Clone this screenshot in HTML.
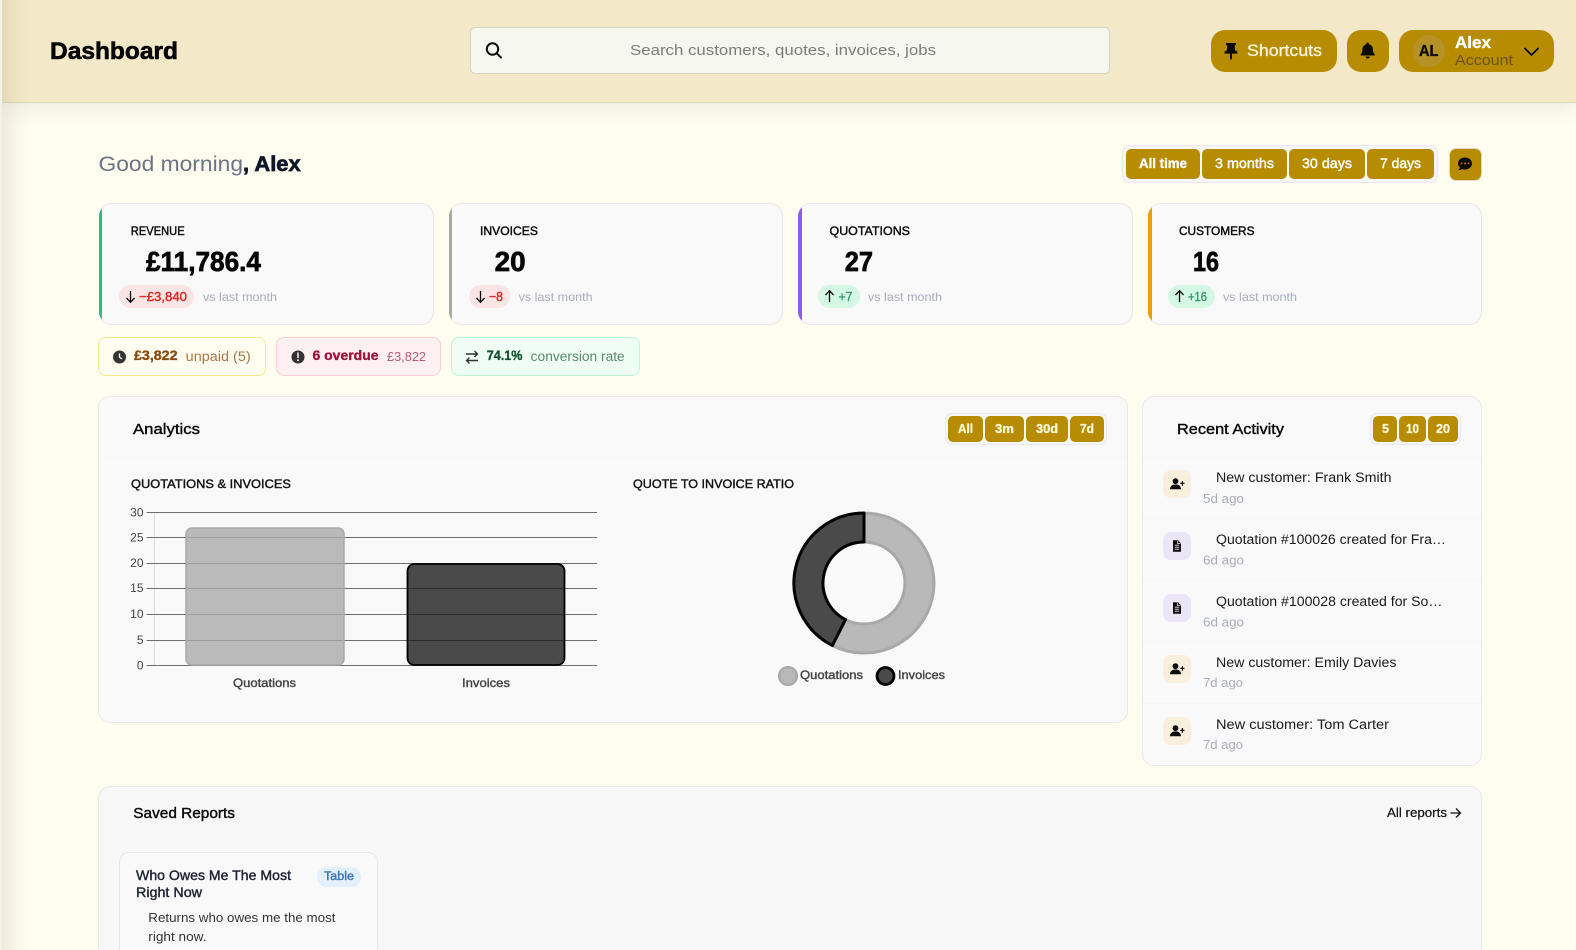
<!DOCTYPE html>
<html lang="en"><head><meta charset="utf-8"><title>Dashboard</title>
<style>
*{box-sizing:border-box}
html,body{margin:0;padding:0;width:1576px;height:950px;overflow:hidden;background:#fffcf0;font-family:"Liberation Sans",sans-serif}
#page{position:relative;width:1576px;height:950px;overflow:hidden;background:#fffcf0}
.b{position:absolute}
#side{left:0;top:0;width:2px;height:950px;background:#f2f1ea;z-index:3}
#sh{left:2px;top:0;width:30px;height:950px;background:linear-gradient(90deg,rgba(60,50,20,.085),rgba(60,50,20,.025) 50%,rgba(60,50,20,0));z-index:3}
#head{left:2px;top:0;width:1574px;height:103px;background:#f3e9c9;border-bottom:1px solid #e0d6b8;box-shadow:0 4px 22px rgba(0,0,0,.08);z-index:2}
.card{background:#f9f9fa;border:1px solid #e5e7eb;border-left:0;border-radius:13px;top:203px;height:122px;width:335px;overflow:hidden}
.card i{position:absolute;left:0;top:-1px;bottom:-1px;width:3.5px}
.chip{top:337px;height:39px;border-radius:8px;border:1px solid}
.panel{background:#f9f9f9;border:1px solid #e8e9ec;border-radius:12px}
.line{height:1px;background:#f6f6f7}
.btn{background:#b88c00;border-radius:5px}
.grp{background:#f7f7f8;border:1px solid #e8e8ee;border-radius:7px}
svg{position:absolute;left:0;top:0;z-index:4}
text{font-family:"Liberation Sans",sans-serif}
.bd{font-weight:700;stroke-width:.35px}
.m{stroke:currentColor;stroke-width:.4px}
</style></head><body>
<div id="page">
<div class="b" id="side"></div>
<div class="b" id="sh"></div>
<div class="b" id="head"></div>
<div class="b" style="left:470px;top:27px;width:640px;height:47px;background:#f6f7ef;border:1px solid #d6d3c3;border-radius:5px;z-index:3"></div>
<div class="b" style="left:1211px;top:30px;width:126px;height:42px;background:#b88c00;border-radius:14px;z-index:3"></div>
<div class="b" style="left:1347px;top:30px;width:42px;height:42px;background:#b88c00;border-radius:14px;z-index:3"></div>
<div class="b" style="left:1399px;top:30px;width:155px;height:42px;background:#b88c00;border-radius:14px;z-index:3"></div>
<div class="b" style="left:1413px;top:35px;width:32px;height:32px;background:#b59128;border-radius:50%;z-index:3"></div>

<div class="b grp" style="left:1122px;top:145px;width:316px;height:38px"></div>
<div class="b btn" style="left:1126px;top:149px;width:74px;height:30px"></div>
<div class="b btn" style="left:1202px;top:149px;width:85px;height:30px"></div>
<div class="b btn" style="left:1289px;top:149px;width:76px;height:30px"></div>
<div class="b btn" style="left:1367px;top:149px;width:67px;height:30px"></div>
<div class="b btn" style="left:1448.500px;top:147.500px;width:33px;height:33px;border-radius:7px;border:1px solid #e0d8b8"></div>

<div class="b card" style="left:98.500px"><i style="background:#34b67e"></i></div>
<div class="b card" style="left:448.500px;width:334px"><i style="background:#a8a8a8"></i></div>
<div class="b card" style="left:798px"><i style="background:#8b5cf6"></i></div>
<div class="b card" style="left:1148px;width:333.500px"><i style="background:#eaa000"></i></div>
<div class="b" style="left:119px;top:285px;width:75px;height:23px;background:#fbe4e4;border-radius:12px"></div>
<div class="b" style="left:469px;top:285px;width:41px;height:23px;background:#fbe4e4;border-radius:12px"></div>
<div class="b" style="left:818px;top:285px;width:42px;height:23px;background:#d5f8e4;border-radius:12px"></div>
<div class="b" style="left:1168px;top:285px;width:47px;height:23px;background:#d5f8e4;border-radius:12px"></div>

<div class="b chip" style="left:98px;width:168px;background:#fffdf0;border-color:#fde68a"></div>
<div class="b chip" style="left:276px;width:165px;background:#fff1f2;border-color:#fecdd3"></div>
<div class="b chip" style="left:451px;width:189px;background:#f0fdf4;border-color:#bbf7d0"></div>

<div class="b panel" style="left:98px;top:396px;width:1030px;height:327px"></div>
<div class="b line" style="left:99px;top:457px;width:1028px"></div>
<div class="b grp" style="left:945px;top:413px;width:162px;height:32px"></div>
<div class="b btn" style="left:948px;top:416px;width:35px;height:26px"></div>
<div class="b btn" style="left:985px;top:416px;width:39px;height:26px"></div>
<div class="b btn" style="left:1026px;top:416px;width:42px;height:26px"></div>
<div class="b btn" style="left:1070px;top:416px;width:34px;height:26px"></div>

<div class="b panel" style="left:1142px;top:396px;width:340px;height:370px;background:#f9f9fa"></div>
<div class="b line" style="left:1143px;top:457px;width:338px"></div>
<div class="b line" style="left:1143px;top:518px;width:338px"></div>
<div class="b line" style="left:1143px;top:580px;width:338px"></div>
<div class="b line" style="left:1143px;top:641px;width:338px"></div>
<div class="b line" style="left:1143px;top:703px;width:338px"></div>
<div class="b grp" style="left:1370px;top:413px;width:91px;height:32px"></div>
<div class="b btn" style="left:1373px;top:416px;width:24px;height:26px"></div>
<div class="b btn" style="left:1399px;top:416px;width:27px;height:26px"></div>
<div class="b btn" style="left:1428px;top:416px;width:30px;height:26px"></div>
<div class="b" style="left:1163px;top:470px;width:28px;height:28px;background:#f8f0dd;border-radius:8px"></div>
<div class="b" style="left:1163px;top:532px;width:28px;height:28px;background:#ebe5f8;border-radius:8px"></div>
<div class="b" style="left:1163px;top:594px;width:28px;height:28px;background:#ebe5f8;border-radius:8px"></div>
<div class="b" style="left:1163px;top:655px;width:28px;height:28px;background:#f8f0dd;border-radius:8px"></div>
<div class="b" style="left:1163px;top:717px;width:28px;height:28px;background:#f8f0dd;border-radius:8px"></div>

<div class="b panel" style="left:98px;top:786px;width:1384px;height:190px;background:#f8f8f9"></div>
<div class="b line" style="left:99px;top:835px;width:1382px"></div>
<div class="b" style="left:119px;top:852px;width:259px;height:120px;background:#f9f9fa;border:1px solid #e5e7eb;border-radius:10px"></div>
<div class="b" style="left:317px;top:867px;width:44px;height:20px;background:#e3effb;border-radius:10px"></div>

<svg width="1576" height="950" viewBox="0 0 1576 950" xmlns="http://www.w3.org/2000/svg">
<!-- header -->
<text x="50" y="59" font-size="24.500" class="bd" fill="#050505" stroke="#050505" style="stroke-width:.6px" textLength="128" lengthAdjust="spacingAndGlyphs">Dashboard</text>
<g fill="none" stroke="#0a0a0a" stroke-width="2"><circle cx="492.500" cy="49" r="5.700"/><path d="M496.600 53.200l4.400 4.400" stroke-linecap="round"/></g>
<text x="630" y="55" font-size="15" fill="#7c7c78" textLength="306" lengthAdjust="spacingAndGlyphs">Search customers, quotes, invoices, jobs</text>
<path transform="translate(1231 51)" fill="#0a0a00" d="M-5-8h10v2.200h-1.400l.7 5.500C6-.3 6.400.5 6.400 1.600v1H1v5l-1 1.500-1-1.500v-5H-6.400v-1C-6.400.5-6-.3-4.300-.3L-3.600-5.800H-5z"/>
<text x="1247" y="56" font-size="17" class="m" fill="#fdf6dd" color="#fdf6dd" style="stroke-width:.3px" textLength="75" lengthAdjust="spacingAndGlyphs">Shortcuts</text>
<path transform="translate(1367.700 51)" fill="#0a0a00" d="M0-8.500a1.200 1.200 0 0 1 1.200 1.200v.5C3.800-6.200 5.300-4 5.300-1.500c0 2.500.8 3.700 1.700 4.700V4.500H-7V3.200c.9-1 1.700-2.200 1.700-4.700C-5.300-4-3.800-6.200-1.200-6.800v-.5A1.200 1.200 0 0 1 0-8.500zM-2 5.500h4a2 2 0 0 1-4 0z"/>
<text x="1419" y="56" font-size="15.500" class="bd" fill="#0a0a00" stroke="#0a0a00" textLength="19.500" lengthAdjust="spacingAndGlyphs">AL</text>
<text x="1455" y="48" font-size="16.500" class="bd" fill="#fff" stroke="#fff" textLength="36" lengthAdjust="spacingAndGlyphs">Alex</text>
<text x="1455" y="65" font-size="14.500" fill="#6a5410" textLength="58" lengthAdjust="spacingAndGlyphs">Account</text>
<path d="M1525 48.500l6.500 6.500 6.500-6.500" fill="none" stroke="#0a0a00" stroke-width="1.800" stroke-linecap="round" stroke-linejoin="round"/>

<!-- greeting -->
<text x="98.500" y="171" font-size="21" fill="#6b7485" textLength="144.500" lengthAdjust="spacingAndGlyphs">Good morning</text>
<text x="243" y="171" font-size="21" class="bd" fill="#0f172a" stroke="#0f172a" style="stroke-width:.7px" textLength="57.700" lengthAdjust="spacingAndGlyphs">, Alex</text>
<text x="1139" y="168" font-size="13.500" class="bd" fill="#fff" stroke="#fff" textLength="48" lengthAdjust="spacingAndGlyphs">All time</text>
<text x="1215" y="168" font-size="13.500" class="m" fill="#fff" color="#fff" textLength="59" lengthAdjust="spacingAndGlyphs">3 months</text>
<text x="1302" y="168" font-size="13.500" class="m" fill="#fff" color="#fff" textLength="50" lengthAdjust="spacingAndGlyphs">30 days</text>
<text x="1380" y="168" font-size="13.500" class="m" fill="#fff" color="#fff" textLength="41" lengthAdjust="spacingAndGlyphs">7 days</text>
<path fill="#0a0a00" d="M1465 157.500c4 0 7 2.600 7 6s-3 6-7 6c-1 0-2-.2-2.800-.5-.9.6-2.200 1.200-3.900 1.100.9-.9 1.500-1.900 1.700-2.800-1.200-1-2-2.300-2-3.800 0-3.400 3-6 7-6z"/>
<g fill="#c8641e"><circle cx="1461.500" cy="163.500" r="1"/><circle cx="1465" cy="163.500" r="1"/><circle cx="1468.500" cy="163.500" r="1"/></g>

<!-- stat cards -->
<g font-size="11.500" class="m" fill="#0a0a0a" color="#0a0a0a">
<text x="130.700" y="235" textLength="54" lengthAdjust="spacingAndGlyphs">REVENUE</text>
<text x="480" y="235" textLength="58" lengthAdjust="spacingAndGlyphs">INVOICES</text>
<text x="829.500" y="235" textLength="80.500" lengthAdjust="spacingAndGlyphs">QUOTATIONS</text>
<text x="1179" y="235" textLength="75.500" lengthAdjust="spacingAndGlyphs">CUSTOMERS</text>
</g>
<g font-size="28" class="bd" fill="#050505" stroke="#050505" style="stroke-width:.7px">
<text x="146" y="271" textLength="115" lengthAdjust="spacingAndGlyphs">£11,786.4</text>
<text x="494.600" y="271" textLength="31" lengthAdjust="spacingAndGlyphs">20</text>
<text x="844.700" y="271" textLength="28.300" lengthAdjust="spacingAndGlyphs">27</text>
<text x="1193" y="271" textLength="26" lengthAdjust="spacingAndGlyphs">16</text>
</g>
<g fill="none" stroke="#0a0a0a" stroke-width="1.300">
<path d="M130.500 291v11M126.500 298l4 4.300 4-4.300"/>
<path d="M480.500 291v11M476.500 298l4 4.300 4-4.300"/>
<path d="M829.500 302v-11M825.500 295l4-4.300 4 4.300"/>
<path d="M1179.500 302v-11M1175.500 295l4-4.300 4 4.300"/>
</g>
<text x="139" y="301" font-size="13" class="m" fill="#dc2626" color="#dc2626" textLength="48" lengthAdjust="spacingAndGlyphs">−£3,840</text>
<text x="489" y="301" font-size="13" class="m" fill="#dc2626" color="#dc2626" textLength="14" lengthAdjust="spacingAndGlyphs">−8</text>
<text x="838.500" y="301" font-size="13" class="m" fill="#3a9c6a" color="#3a9c6a" textLength="14" lengthAdjust="spacingAndGlyphs">+7</text>
<text x="1188" y="301" font-size="13" class="m" fill="#3a9c6a" color="#3a9c6a" textLength="19" lengthAdjust="spacingAndGlyphs">+16</text>
<g font-size="12" fill="#a8adba">
<text x="203" y="301" textLength="74" lengthAdjust="spacingAndGlyphs">vs last month</text>
<text x="518.600" y="301" textLength="74" lengthAdjust="spacingAndGlyphs">vs last month</text>
<text x="868" y="301" textLength="74" lengthAdjust="spacingAndGlyphs">vs last month</text>
<text x="1223" y="301" textLength="74" lengthAdjust="spacingAndGlyphs">vs last month</text>
</g>

<!-- alert chips -->
<circle cx="119.500" cy="357" r="6.500" fill="#333"/><path d="M119.500 353.500v3.700l2.500 1.700" fill="none" stroke="#fffdf0" stroke-width="1.300"/>
<text x="134" y="360" font-size="13.500" class="bd" fill="#8a4b0f" stroke="#8a4b0f" textLength="43.500" lengthAdjust="spacingAndGlyphs">£3,822</text>
<text x="185.700" y="361" font-size="13.500" fill="#a9784a" textLength="65" lengthAdjust="spacingAndGlyphs">unpaid (5)</text>
<circle cx="298" cy="357" r="6.500" fill="#333"/><path d="M298 353v4.500" stroke="#fff1f2" stroke-width="1.500" stroke-linecap="round"/><circle cx="298" cy="360.200" r="1" fill="#fff1f2"/>
<text x="312.500" y="360" font-size="13.500" class="bd" fill="#9f1239" stroke="#9f1239" textLength="66" lengthAdjust="spacingAndGlyphs">6 overdue</text>
<text x="387" y="361" font-size="13" fill="#bc5a78" textLength="39" lengthAdjust="spacingAndGlyphs">£3,822</text>
<g fill="none" stroke="#333" stroke-width="1.400"><path d="M466 354h11.500M474.500 351l3 3-3 3M478 360.500h-11.500M469.500 357.500l-3 3 3 3"/></g>
<text x="486.800" y="360" font-size="13.500" class="bd" fill="#14532d" stroke="#14532d" textLength="35.700" lengthAdjust="spacingAndGlyphs">74.1%</text>
<text x="530.700" y="361" font-size="13.500" fill="#5a8a6b" textLength="94" lengthAdjust="spacingAndGlyphs">conversion rate</text>

<!-- analytics -->
<text x="133" y="434" font-size="15" class="m" fill="#0a0a0a" color="#0a0a0a" textLength="67" lengthAdjust="spacingAndGlyphs">Analytics</text>
<text x="958" y="433" font-size="12.500" class="bd" fill="#fff6d8" stroke="#fff6d8" textLength="15" lengthAdjust="spacingAndGlyphs">All</text>
<text x="995" y="433" font-size="12.500" class="bd" fill="#fff6d8" stroke="#fff6d8" textLength="19" lengthAdjust="spacingAndGlyphs">3m</text>
<text x="1036" y="433" font-size="12.500" class="bd" fill="#fff6d8" stroke="#fff6d8" textLength="22" lengthAdjust="spacingAndGlyphs">30d</text>
<text x="1080" y="433" font-size="12.500" class="bd" fill="#fff6d8" stroke="#fff6d8" textLength="14" lengthAdjust="spacingAndGlyphs">7d</text>
<text x="131" y="488" font-size="12" class="m" fill="#111" color="#111" textLength="160" lengthAdjust="spacingAndGlyphs">QUOTATIONS &amp; INVOICES</text>
<text x="633" y="488" font-size="12" class="m" fill="#111" color="#111" textLength="161" lengthAdjust="spacingAndGlyphs">QUOTE TO INVOICE RATIO</text>

<!-- bar chart -->
<path d="M154.500 512v154" stroke="#d9d9d9" fill="none"/>
<g stroke="#6e6e6e" fill="none">
<path d="M146.500 512.500H597M146.500 537.500H597M146.500 563.500H597M146.500 588.500H597M146.500 614.500H597M146.500 640.500H597M146.500 665.500H597"/>
</g>
<rect x="186" y="528" width="158" height="137" rx="6" fill="#bababa" stroke="#a8a8a8" stroke-width="1.500"/>
<path d="M187 537.500h156M187 563.500h156M187 588.500h156M187 614.500h156M187 640.500h156" stroke="#9c9c9c"/>
<rect x="407.500" y="564" width="157" height="101" rx="7" fill="#4a4a4a" stroke="#000" stroke-width="1.800"/>
<path d="M408.500 588.500h155M408.500 614.500h155M408.500 640.500h155" stroke="#2c2c2c"/>
<g font-size="12" fill="#444" text-anchor="end">
<text x="143.500" y="516.500">30</text><text x="143.500" y="541.500">25</text><text x="143.500" y="567">20</text><text x="143.500" y="592">15</text><text x="143.500" y="618">10</text><text x="143.500" y="644">5</text><text x="143.500" y="669.500">0</text>
</g>
<text x="233" y="687" font-size="12" class="m" fill="#444" color="#444" textLength="63" lengthAdjust="spacingAndGlyphs">Quotations</text>
<text x="462" y="687" font-size="12" class="m" fill="#444" color="#444" textLength="48" lengthAdjust="spacingAndGlyphs">Invoices</text>

<!-- donut: center 864,583 r 70/41 -->
<path d="M864 513A70 70 0 1 1 832.400 645.500L845.500 619.600A41 41 0 1 0 864 542Z" fill="#b9b9b9" stroke="#a8a8a8" stroke-width="3" stroke-linejoin="round"/>
<path d="M864 513A70 70 0 0 0 832.400 645.500L845.500 619.600A41 41 0 0 1 864 542Z" fill="#4a4a4a" stroke="#000" stroke-width="3" stroke-linejoin="round"/>
<circle cx="788" cy="676" r="8.800" fill="#b9b9b9" stroke="#a8a8a8" stroke-width="2.500"/>
<text x="800" y="679" font-size="12" class="m" fill="#444" color="#444" textLength="63" lengthAdjust="spacingAndGlyphs">Quotations</text>
<circle cx="885.500" cy="676" r="8.500" fill="#4a4a4a" stroke="#000" stroke-width="2.800"/>
<text x="898" y="679" font-size="12" class="m" fill="#444" color="#444" textLength="47" lengthAdjust="spacingAndGlyphs">Invoices</text>

<!-- activity -->
<text x="1177" y="434" font-size="15" class="m" fill="#0a0a0a" color="#0a0a0a" textLength="107" lengthAdjust="spacingAndGlyphs">Recent Activity</text>
<text x="1382" y="433" font-size="12.500" class="bd" fill="#fff6d8" stroke="#fff6d8" textLength="7" lengthAdjust="spacingAndGlyphs">5</text>
<text x="1406" y="433" font-size="12.500" class="bd" fill="#fff6d8" stroke="#fff6d8" textLength="13" lengthAdjust="spacingAndGlyphs">10</text>
<text x="1436" y="433" font-size="12.500" class="bd" fill="#fff6d8" stroke="#fff6d8" textLength="14" lengthAdjust="spacingAndGlyphs">20</text>
<g font-size="13.500" fill="#1a1a1a">
<text x="1216" y="482" textLength="175.500" lengthAdjust="spacingAndGlyphs">New customer: Frank Smith</text>
<text x="1216" y="544" textLength="230" lengthAdjust="spacingAndGlyphs">Quotation #100026 created for Fra…</text>
<text x="1216" y="606" textLength="226.500" lengthAdjust="spacingAndGlyphs">Quotation #100028 created for So…</text>
<text x="1216" y="667" textLength="180.500" lengthAdjust="spacingAndGlyphs">New customer: Emily Davies</text>
<text x="1216" y="729" textLength="173" lengthAdjust="spacingAndGlyphs">New customer: Tom Carter</text>
</g>
<g font-size="12.500" fill="#a8adba">
<text x="1203" y="503" textLength="41" lengthAdjust="spacingAndGlyphs">5d ago</text>
<text x="1203" y="564.500" textLength="41" lengthAdjust="spacingAndGlyphs">6d ago</text>
<text x="1203" y="626.500" textLength="41" lengthAdjust="spacingAndGlyphs">6d ago</text>
<text x="1203" y="687" textLength="40" lengthAdjust="spacingAndGlyphs">7d ago</text>
<text x="1203" y="749" textLength="40" lengthAdjust="spacingAndGlyphs">7d ago</text>
</g>
<defs>
<g id="up"><circle cx="-1.500" cy="-2.800" r="2.900"/><path d="M-7 5.200c0-2.900 2.200-4.700 4.300-4.700h2.400c2.100 0 4.300 1.800 4.300 4.700z"/><path d="M4.800-3h1.200v1.800h1.500v1.100H6v1.800H4.800v-1.800H3.200v-1.100h1.600z"/></g>
<g id="fl"><path d="M-4-5.800H1L4-2.800V5.800H-4z" fill-rule="evenodd"/><path d="M-2.200-.8h4.400M-2.200 1.200h4.400M-2.200 3.200h4.400" stroke="#ebe5f8" stroke-width=".9" fill="none"/><path d="M.6-5.300v2.900h2.900" stroke="#ebe5f8" stroke-width=".7" fill="none"/></g>
</defs>
<g fill="#0a0a0a">
<use href="#up" x="1177" y="484"/><use href="#fl" x="1177" y="546"/><use href="#fl" x="1177" y="608"/><use href="#up" x="1177" y="669"/><use href="#up" x="1177" y="731"/>
</g>

<!-- saved reports -->
<text x="133.300" y="818" font-size="15" class="m" fill="#0a0a0a" color="#0a0a0a" textLength="101.700" lengthAdjust="spacingAndGlyphs">Saved Reports</text>
<text x="1387" y="817" font-size="13" class="m" fill="#111" color="#111" style="stroke-width:.2px" textLength="60" lengthAdjust="spacingAndGlyphs">All reports</text>
<path d="M1450.500 813h10M1456 808.500l4.500 4.500-4.500 4.500" fill="none" stroke="#111" stroke-width="1.300"/>
<text x="136" y="880" font-size="14" class="m" fill="#1e2433" color="#1e2433" textLength="155" lengthAdjust="spacingAndGlyphs">Who Owes Me The Most</text>
<text x="136" y="897" font-size="14" class="m" fill="#1e2433" color="#1e2433" textLength="66" lengthAdjust="spacingAndGlyphs">Right Now</text>
<text x="324" y="880" font-size="11.500" class="m" fill="#3d74b5" color="#3d74b5" textLength="30" lengthAdjust="spacingAndGlyphs">Table</text>
<text x="148.300" y="922" font-size="13" fill="#333" textLength="187.200" lengthAdjust="spacingAndGlyphs">Returns who owes me the most</text>
<text x="148.300" y="941" font-size="13" fill="#333" textLength="58.200" lengthAdjust="spacingAndGlyphs">right now.</text>
</svg>
</div>
</body></html>
